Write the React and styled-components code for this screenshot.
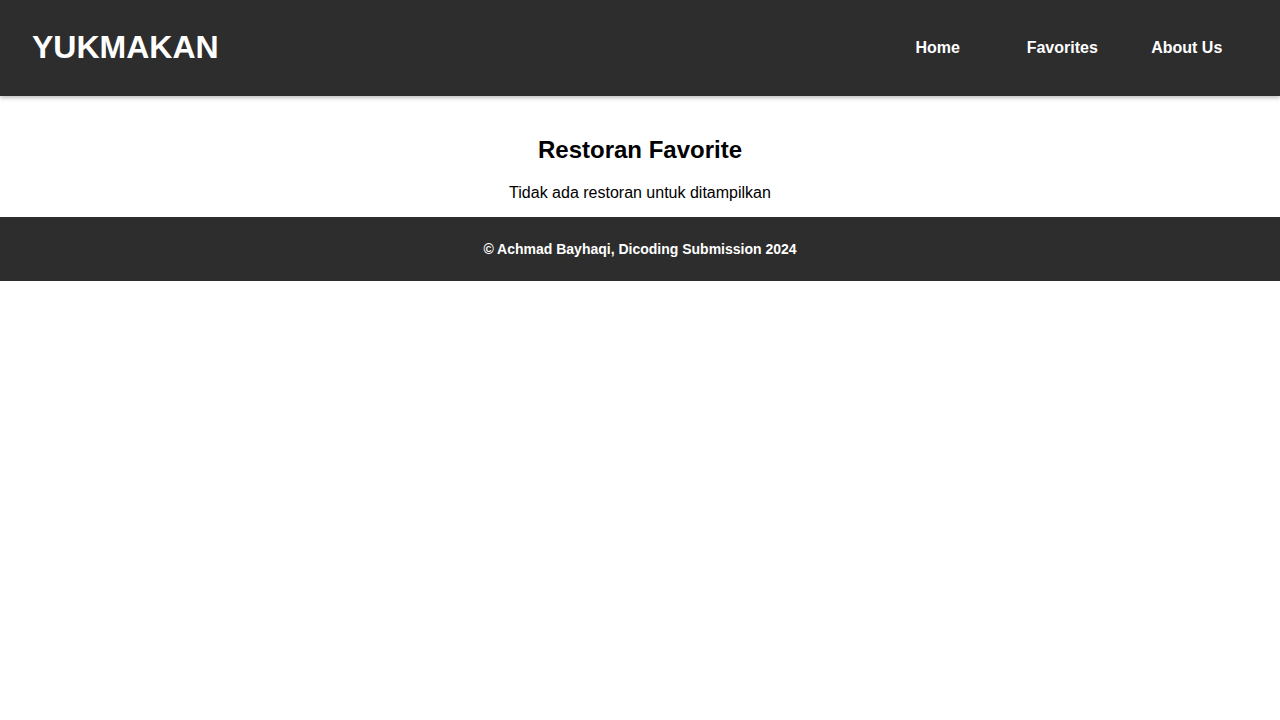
import React from "react";
import styled, { createGlobalStyle } from "styled-components";

const GlobalStyle = createGlobalStyle`
  * { box-sizing: border-box; }
  html, body { margin: 0; padding: 0; background: #ffffff; }
  body { font-family: "Liberation Sans", Arial, sans-serif; color: #000; }
`;

const Header = styled.header`
  height: 96px;
  background: #2d2d2d;
  display: flex;
  align-items: center;
  justify-content: space-between;
  padding: 0 31px 0 32px;
  box-shadow: 0 2px 4px rgba(0, 0, 0, 0.25);
  position: relative;
  z-index: 1;
`;

const Logo = styled.h1`
  margin: 0 0 1px;
  font-size: 32px;
  font-weight: 700;
  color: #ffffff;
`;

const Nav = styled.nav`
  display: flex;
  align-items: center;
`;

const NavLink = styled.a`
  width: 124.5px;
  text-align: center;
  color: #ffffff;
  font-size: 16px;
  font-weight: 700;
  text-decoration: none;
  line-height: 44px;
  margin-bottom: 1px;
`;

const Main = styled.main`
  padding: 20px 16px 0;
  text-align: center;
`;

const Title = styled.h2`
  margin: 20px 0;
  font-size: 24px;
  font-weight: 700;
`;

const Empty = styled.p`
  margin: 0 0 15px;
  font-size: 16px;
`;

const Footer = styled.footer`
  height: 64px;
  background: #2d2d2d;
  display: flex;
  align-items: center;
  justify-content: center;
`;

const FooterText = styled.p`
  margin: 0;
  color: #ffffff;
  font-size: 14px;
  font-weight: 700;
`;

export default function App() {
  return (
    <>
      <GlobalStyle />
      <Header>
        <Logo>YUKMAKAN</Logo>
        <Nav>
          <NavLink href="#">Home</NavLink>
          <NavLink href="#">Favorites</NavLink>
          <NavLink href="#">About Us</NavLink>
        </Nav>
      </Header>
      <Main>
        <Title>Restoran Favorite</Title>
        <Empty>Tidak ada restoran untuk ditampilkan</Empty>
      </Main>
      <Footer>
        <FooterText>© Achmad Bayhaqi, Dicoding Submission 2024</FooterText>
      </Footer>
    </>
  );
}
